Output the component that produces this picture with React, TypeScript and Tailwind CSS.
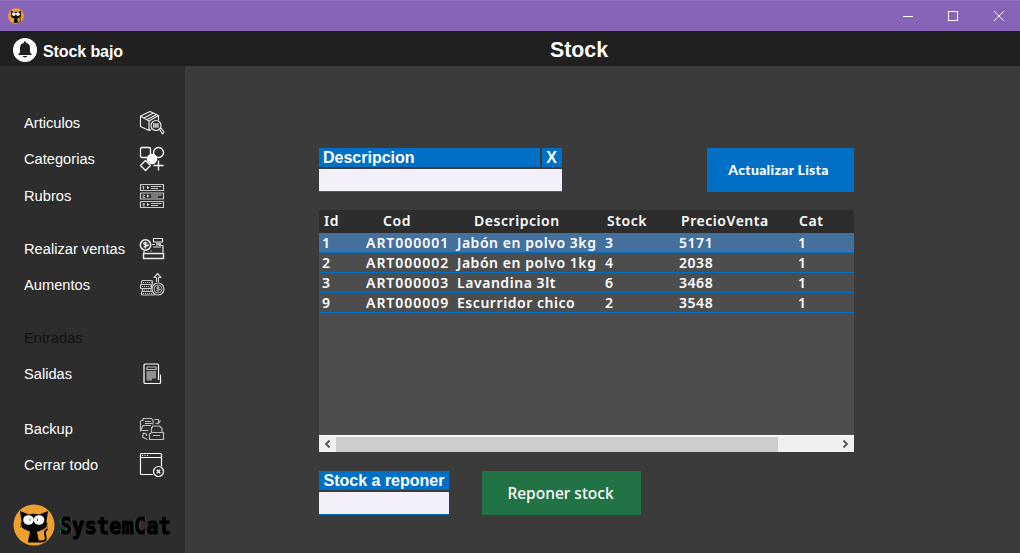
import type { ReactNode } from "react";

function CatFace() {
  return (
    <>
      <circle cx="21" cy="21" r="20.5" fill="#eda02f" />
      <path d="M7 7l9 3.500q5-1.500 10 0L35 7l-1.500 10q1.500 7-4.500 9-3.500 2-8 2t-8-2q-6-2-4.500-9z" fill="#050505" />
      <path d="M17.500 26h6l2 9q1 2.500-2 3h-6q-3-.5-2-3z" fill="#050505" />
      <path d="M15 37.500h13q6 0 4.500-5.500-2-5 2-7" fill="none" stroke="#050505" strokeWidth="1.800" />
      <path d="M7 20l5 1M7 23l5-1M35 20l-5 1M35 23l-5-1" stroke="#050505" strokeWidth=".7" />
      <ellipse cx="15.500" cy="16" rx="5.300" ry="4.800" fill="#fff" />
      <ellipse cx="26" cy="16" rx="5.300" ry="4.800" fill="#fff" />
      <path d="M17 14.500v2.500M24.500 14.500v2.500" stroke="#444" strokeWidth=".8" />
    </>
  );
}

function Icon({ children }: { children: ReactNode }) {
  return (
    <svg width="26" height="26" viewBox="0 0 26 26" fill="none" stroke="#e8e8e8" strokeWidth="1.200" strokeLinejoin="round">
      {children}
    </svg>
  );
}

const boxIcon = (
  <Icon>
    <path d="M1.500 6L11 1.500 19.500 5.500 10 11zM1.500 6v10.500L10 20.500V11M19.500 5.500v5M5 8l9-4.700M8 9.500l9-4.500M10 20.500l2.500-1" />
    <circle cx="17" cy="15.500" r="5" />
    <path d="M14 13.200h6v4.500h-6z" fill="#9a9a9a" stroke="none" />
    <path d="M14.500 13.500v4M16.500 13.500v4M18.500 13.500v4" strokeWidth=".6" />
    <path d="M20.500 19l1.500-1 3 4-1.500 2z" />
  </Icon>
);

const categoriesIcon = (
  <Icon>
    <g stroke="#fff" strokeWidth="1.300">
      <rect x="1.500" y="1.500" width="10" height="10" rx="1.500" />
      <circle cx="19.500" cy="6.500" r="5" />
      <path d="M6.500 14.500l5 5-5 5-5-5zM19.500 14.500v10M14.500 19.500h10" />
    </g>
    <circle cx="13" cy="13" r="5.200" fill="#fff" stroke="none" />
  </Icon>
);

const listIcon = (
  <Icon>
    {[0, 8.5, 17].map((y, i) => (
      <g key={y} transform={`translate(0 ${y})`} stroke="#c9c9c9">
        <rect x="1.500" y="1.500" width="23" height="6" />
        {i === 0 ? <path d="M3.500 3.500h1v3" /> : <path d="M3.500 3.500h2v1h-1.500v1.500h2" strokeWidth=".8" />}
        <path d="M8 2.800l2.500 1.700L8 6.200z" fill="#ddd" stroke="none" />
        <path d="M12 3.500h10.500M12 5.500h7" />
      </g>
    ))}
  </Icon>
);

const salesIcon = (
  <Icon>
    <path d="M12 15.500v-1M20 9.500h4v7M5 15v2" />
    <path d="M14.500 2.500h9v3.500h-9zM13 8.500h3M14 11h8" />
    <path d="M17 6.500h5v3h-5z" fill="#bbb" stroke="none" />
    <circle cx="6.500" cy="9" r="5.200" strokeWidth="1.600" />
    <path d="M8.500 7.200q-3.800-1.200-3.800.4t3.600 1.400-3.800 2M6.500 5.500v7" />
    <path d="M4.500 17.500h20v5h-20z" strokeWidth="1.500" />
  </Icon>
);

const coinsIcon = (
  <Icon>
    <g stroke="#c9c9c9">
      <rect x="2.500" y="8.500" width="11" height="4" rx="1" />
      <rect x="1.500" y="12.500" width="11" height="4" rx="1" />
      <rect x="3.500" y="16.500" width="10" height="3" rx="1" />
      <rect x="2.500" y="19.500" width="13" height="3.500" rx="1" />
      <path d="M4 10.500h9M3 14.500h9M5 18h8M4 21.500h10" strokeDasharray="1 1" />
      <circle cx="19" cy="17" r="6" fill="#2d2d2d" />
      <circle cx="19" cy="17" r="4" strokeWidth=".8" />
      <path d="M20.500 15.500q-3-1-3 .3t3 1.200-3 1.700M19 14v6" strokeWidth=".8" />
      <path d="M17.500 10V5.500h-2.500l3.500-4 3.500 4h-2.500V10" />
    </g>
  </Icon>
);

const noteIcon = (
  <Icon>
    <path d="M19.500 19V4q0-1-1-1H6q-1 0-1 1v17.500q0 1 1 1h14.500q1 0 1-1v-8" stroke="#fff" />
    <path d="M8 6h9v2.500H8z" stroke="#bbb" />
    <path d="M7.500 10H17v7.500h-4v2H7.500z" fill="#929292" stroke="none" />
  </Icon>
);

const backupIcon = (
  <Icon>
    <g stroke="#bcbcbc">
      <path d="M1.500 15.500V5.500q0-1 1-1h1.500V2.500h8.500l1.500 2v4M1.500 15l2.500-5.500h8M6 5.500h6M6 7.500h7" />
      <path d="M12.500 16v-4.500h1V10h7l2.500 2.500v3.500M10.500 23.500V18l2-1.500h12v7zM14 19.500h7" />
      <path d="M15.500 3.500h4v4M19.500 7.500h-3M19.500 7.500l2-3M4.500 17l-1 4 5 2.500M4.500 17l3 1v2M2.500 14.500h7" />
    </g>
  </Icon>
);

const closeAllIcon = (
  <Icon>
    <g stroke="#fff">
      <path d="M14 22.500H2.500q-1 0-1-1V2.500q0-1 1-1h19q1 0 1 1v12M1.500 5.500H22.500" />
      <path d="M3 3.500h1M5.500 3.500h1M8 3.500h1" />
      <circle cx="19.500" cy="19.500" r="5" />
      <path d="M17.800 17.800l3.400 3.400M21.200 17.800l-3.400 3.400" strokeWidth="1.300" />
    </g>
  </Icon>
);

const menu = [
  { label: "Articulos", icon: boxIcon, gap: "" },
  { label: "Categorias", icon: categoriesIcon, gap: "" },
  { label: "Rubros", icon: listIcon, gap: "mt-px" },
  { label: "Realizar ventas", icon: salesIcon, gap: "mt-[17px]" },
  { label: "Aumentos", icon: coinsIcon, gap: "" },
  { label: "Entradas", icon: null, gap: "mt-[17px]" },
  { label: "Salidas", icon: noteIcon, gap: "" },
  { label: "Backup", icon: backupIcon, gap: "mt-[19px]" },
  { label: "Cerrar todo", icon: closeAllIcon, gap: "" },
];

const products = [
  ["1", "ART000001", "Jabón en polvo 3kg", "3", "5171", "1"],
  ["2", "ART000002", "Jabón en polvo 1kg", "4", "2038", "1"],
  ["3", "ART000003", "Lavandina 3lt", "6", "3468", "1"],
  ["9", "ART000009", "Escurridor chico", "2", "3548", "1"],
];

function TitleBar() {
  return (
    <div className="flex h-[31px] shrink-0 items-center border-t border-[#916fbd] bg-[#8764b8] pl-[8px] pr-[14px]">
      <svg width="16" height="16" viewBox="0 0 42 42"><CatFace /></svg>
      <svg className="ml-auto" width="104" height="12" viewBox="0 0 104 12" fill="none" stroke="#fff">
        <path d="M1 6.500h10" />
        <rect x="46.500" y="1.500" width="9" height="9" />
        <path d="M92 1l10 10M102 1L92 11" />
      </svg>
    </div>
  );
}

function Sidebar() {
  return (
    <aside className="flex w-[185px] shrink-0 flex-col bg-[#2d2d2d] pt-[39px]">
      {menu.map((m) => (
        <div key={m.label} className={`flex h-9 shrink-0 items-center justify-between pl-6 pr-5 ${m.gap}`}>
          <span className={`text-[14.67px] leading-none ${m.icon ? "text-white" : "text-[#111]"}`}>{m.label}</span>
          {m.icon}
        </div>
      ))}
      <div className="mt-[21px] flex h-[42px] items-center pl-[13px]">
        <svg className="shrink-0" width="42" height="42" viewBox="0 0 42 42"><CatFace /></svg>
        <div className="ml-[5px] mt-[3px] origin-left scale-x-[0.86] whitespace-nowrap font-['DejaVu_Sans_Mono',monospace] text-[23px] font-bold leading-none tracking-[0.5px] text-black [-webkit-text-stroke:1.1px_black]">
          <span className="[text-shadow:-1.500px_0_#00a8a8,1.500px_0_#b83030]">S</span>ystem
          <span className="[text-shadow:-1.500px_0_#006e6e,1.500px_0_#b83030]">C</span>at
        </div>
      </div>
    </aside>
  );
}

function StockTable() {
  return (
    <div className="mt-[18px] flex h-[242px] w-[535px] flex-col bg-[#4d4d4d] font-['Noto_Sans',sans-serif] text-[14px] font-semibold leading-none tracking-[0.55px] text-white">
      <div className="grid h-[23px] grid-cols-[42px_92px_148px_75px_118px_60px] items-center bg-[#2d2d2d] pb-0.5">
        <span className="pl-[5px]">Id</span>
        <span className="pl-[22px]">Cod</span>
        <span className="pl-[21px]">Descripcion</span>
        <span className="pl-[6px]">Stock</span>
        <span className="pl-[5px]">PrecioVenta</span>
        <span className="pl-[5px]">Cat</span>
      </div>
      {products.map((row, i) => (
        <div
          key={row[1]}
          className={`grid h-5 grid-cols-[44px_91px_148px_74px_119px_55px] items-center border-b border-[#0070c6] pl-[3px] ${i === 0 ? "bg-[#44709d]" : ""}`}
        >
          {row.map((cell, c) => (
            <span key={c} className={`whitespace-nowrap ${c === 1 ? "tracking-[0.98px]" : ""}`}>{cell}</span>
          ))}
        </div>
      ))}
      <div className="mt-auto flex h-[17px] items-center border-t border-white bg-[#f0f0f0]">
        <svg width="17" height="16" viewBox="0 0 17 16" fill="none" stroke="#555" strokeWidth="1.800"><path d="M10.500 4.500L7 8l3.500 3.500" /></svg>
        <div className="h-[15px] w-[442px] bg-[#cdcdcd]" />
        <svg className="ml-auto" width="17" height="16" viewBox="0 0 17 16" fill="none" stroke="#555" strokeWidth="1.800"><path d="M6.500 4.500L10 8l-3.500 3.500" /></svg>
      </div>
    </div>
  );
}

export default function App() {
  return (
    <div className="flex h-[553px] w-[1020px] flex-col overflow-hidden bg-[#3b3b3b] font-['Liberation_Sans',Arial,sans-serif] text-white">
      <TitleBar />
      <header className="flex h-[35px] shrink-0 items-center bg-[#202020] pl-[13px]">
        <svg className="mt-0.5" width="24" height="24" viewBox="0 0 24 24">
          <circle cx="12" cy="12" r="12" fill="#fff" />
          <path d="M11 3.500h2v1.200q4 1 4 5v4.800l1.500 1.500v1h-13v-1L7 14.500V9.700q0-4 4-5zM9.800 18h4.400q-.5 1.500-2.200 1.500T9.800 18z" fill="#202020" />
        </svg>
        <span className="ml-1.5 w-[507px] pt-1.5 text-[16px] font-bold leading-none tracking-[-0.1px]">Stock bajo</span>
        <h1 className="pt-1 text-[21.33px] font-bold leading-none">Stock</h1>
      </header>
      <div className="flex min-h-0 flex-1">
        <Sidebar />
        <main className="flex-1 pl-[134px] pt-[82px]">
          <div className="flex w-[535px] justify-between">
            <div className="w-[243px]">
              <div className="flex gap-0.5 text-[16px] font-bold leading-[19px]">
                <span className="h-[19px] flex-1 bg-[#0070c6] pl-1">Descripcion</span>
                <span className="h-[19px] w-5 bg-[#0070c6] pr-px text-center">X</span>
              </div>
              <input aria-label="Descripcion" className="mt-0.5 block h-[23px] w-full border-b border-[#0070c6] bg-[#f3effb] text-black outline-none" />
            </div>
            <button className="h-11 w-[147px] bg-[#0070c6] pb-0.5 pr-1 font-['Lato',sans-serif] text-[14px] font-black tracking-[0.3px]">Actualizar Lista</button>
          </div>
          <StockTable />
          <div className="mt-[19px] flex gap-[33px]">
            <div className="w-[130px]">
              <div className="h-[19px] bg-[#0070c6] text-center text-[16px] font-bold leading-[19px]">Stock a reponer</div>
              <input aria-label="Stock a reponer" className="mt-0.5 block h-[23px] w-full border-b border-[#0070c6] bg-[#f3f0fb] text-black outline-none" />
            </div>
            <button className="h-11 w-[159px] bg-[#217346] pr-0.5 pt-0.5 font-['Noto_Sans',sans-serif] text-[15.5px] font-medium">Reponer stock</button>
          </div>
        </main>
      </div>
    </div>
  );
}
